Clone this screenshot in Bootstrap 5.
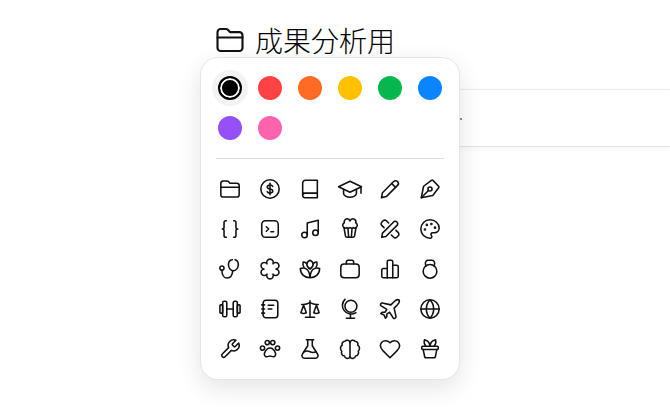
<!DOCTYPE html>
<html lang="ja">
<head>
    <meta charset="UTF-8">
    <meta name="viewport" content="width=device-width, initial-scale=1.0">
    <title>成果分析用</title>
    <link href="https://cdn.jsdelivr.net/npm/bootstrap@5.3.0/dist/css/bootstrap.min.css" rel="stylesheet">
    <style>
        body {
            background: #fff;
            color: #111;
            font-family: "Noto Sans CJK JP", "Liberation Sans", sans-serif;
            overflow: hidden;
            height: 407px;
        }
        .page-head {
            padding: 18px 0 0 215px;
            height: 89px;
            gap: 10px;
        }
        .page-head svg {
            width: 30px;
            height: 30px;
            margin-top: 7px;
            flex-shrink: 0;
        }
        .page-title {
            font-size: 28px;
            line-height: 44px;
            font-weight: 300;
            margin: 0;
            color: #000;
        }
        .doc-bar {
            margin-left: 300px;
            height: 58px;
            border-top: 1px solid #ececec;
            border-bottom: 1px solid #e2e2e2;
            box-shadow: 0 2px 6px rgba(0, 0, 0, .04);
        }
        .doc-mark {
            width: 2px;
            height: 2px;
            margin-left: 160px;
            margin-top: 1px;
            background: #8a8a8a;
        }
        .picker {
            position: absolute;
            left: 200px;
            top: 57px;
            width: 260px;
            height: 323px;
            padding: 10px 9px 0;
            background: #fff;
            border: 1px solid #e6e6e6;
            border-radius: 18px;
            box-shadow: 0 8px 24px rgba(0, 0, 0, .11);
        }
        .picker-grid {
            display: grid;
            grid-template-columns: repeat(6, 40px);
            grid-auto-rows: 40px;
        }
        .cell {
            display: flex;
            align-items: center;
            justify-content: center;
        }
        .swatch {
            width: 24px;
            height: 24px;
            border-radius: 50%;
        }
        .cell-active {
            width: 36px;
            height: 36px;
            margin: 2px;
            border-radius: 50%;
            background: #f3f3f3;
        }
        .swatch-active {
            background: #000;
            border: 2px solid #000;
            box-shadow: inset 0 0 0 2px #fff;
        }
        .picker-rule {
            margin: 10px 6px;
            border-top: 1px solid #dedede;
            opacity: 1;
        }
        .ico {
            width: 22px;
            height: 22px;
            fill: none;
            overflow: visible;
            stroke: #111;
            stroke-width: 1.7;
            stroke-linecap: round;
            stroke-linejoin: round;
        }
    </style>
</head>
<body>
    <!-- Title -->
    <header class="page-head d-flex align-items-start">
        <svg class="ico" viewBox="0 0 24 24"><path d="M2 8.500V5.700A2.500 2.500 0 0 1 4.500 3.200h4.200c.7 0 1.300.3 1.800.8L12 5.700h7.500A2.500 2.500 0 0 1 22 8.200v10.100a2.500 2.500 0 0 1-2.500 2.500h-15A2.500 2.500 0 0 1 2 18.300z"/><path d="M2 10h20"/></svg>
        <h1 class="page-title">成果分析用</h1>
    </header>

    <div class="doc-bar d-flex align-items-center"><div class="doc-mark"></div></div>

    <!-- Icon picker -->
    <div class="picker">
        <div class="picker-grid">
            <div class="cell"><div class="cell cell-active"><div class="swatch swatch-active"></div></div></div>
            <div class="cell"><div class="swatch" style="background:#ff4343"></div></div>
            <div class="cell"><div class="swatch" style="background:#ff6b24"></div></div>
            <div class="cell"><div class="swatch" style="background:#ffc000"></div></div>
            <div class="cell"><div class="swatch" style="background:#04b84f"></div></div>
            <div class="cell"><div class="swatch" style="background:#0a84ff"></div></div>
            <div class="cell"><div class="swatch" style="background:#9550f8"></div></div>
            <div class="cell"><div class="swatch" style="background:#ff63ae"></div></div>
        </div>
        <hr class="picker-rule">
        <div class="picker-grid">
            <!-- row 1 -->
            <div class="cell"><svg class="ico" viewBox="0 0 24 24"><path d="M2 8.500V5.700A2.500 2.500 0 0 1 4.500 3.200h4.200c.7 0 1.300.3 1.800.8L12 5.700h7.500A2.500 2.500 0 0 1 22 8.200v10.100a2.500 2.500 0 0 1-2.500 2.500h-15A2.500 2.500 0 0 1 2 18.300z"/><path d="M2 10h20"/></svg></div>
            <div class="cell"><svg class="ico" viewBox="0 0 24 24"><circle cx="12" cy="12" r="10"/><path d="M15 9.200c-.5-1-1.600-1.600-3-1.600-1.800 0-3 .9-3 2.200 0 3.100 6 1.500 6 4.500 0 1.300-1.200 2.200-3 2.200-1.400 0-2.500-.6-3-1.600"/><path d="M12 5.800v12.400"/></svg></div>
            <div class="cell"><svg class="ico" viewBox="0 0 24 24"><path d="M4 18.500V5.500A3 3 0 0 1 7 2.500h13v19H6.500A2.500 2.500 0 0 1 4 19a2.500 2.500 0 0 1 2.500-2.500H20"/></svg></div>
            <div class="cell"><svg class="ico" viewBox="0 0 24 24"><path d="M12 3.500-.5 9.500 12 15.500l12.500-6z"/><path d="M5 12.500V17c0 2 3.500 4 7 4s7-2 7-4v-4.500"/><path d="M24 10v6.500"/></svg></div>
            <div class="cell"><svg class="ico" viewBox="0 0 24 24"><path d="M16 3.800a2.700 2.700 0 0 1 4.200 4.200L8 20.300l-5.300 1.100 1.100-5.300z"/><path d="M13.800 6l4.200 4.200"/></svg></div>
            <div class="cell"><svg class="ico" viewBox="0 0 24 24"><path d="M2.500 21.500 5 9 13.500 2.500c.6-.4 1.200-.4 1.700.1L21.400 9c.5.5.5 1.100.1 1.700L15 19z"/><path d="M2.500 21.500l7.800-7.800"/><circle cx="12" cy="12" r="2.200"/></svg></div>
            <!-- row 2 -->
            <div class="cell"><svg class="ico" viewBox="0 0 24 24"><path d="M8 3H7.500a2 2 0 0 0-2 2v5a2 2 0 0 1-2 2 2 2 0 0 1 2 2v5c0 1.100.9 2 2 2H8"/><path d="M16 21h.5a2 2 0 0 0 2-2v-5c0-1.100.9-2 2-2a2 2 0 0 1-2-2V5a2 2 0 0 0-2-2H16"/></svg></div>
            <div class="cell"><svg class="ico" viewBox="0 0 24 24"><rect x="3" y="3" width="18" height="18" rx="4"/><path d="M8 9.500l2.500 2.500L8 14.500"/><path d="M13 15h3"/></svg></div>
            <div class="cell"><svg class="ico" viewBox="0 0 24 24"><path d="M9 18V5.500L21 2.500v13"/><circle cx="6" cy="18.500" r="3"/><circle cx="18" cy="16" r="3"/></svg></div>
            <div class="cell"><svg class="ico" viewBox="0 0 24 24"><path d="M5.500 10.500a3 3 0 0 1 .3-5.300 3.200 3.200 0 0 1 6.200-2 3.200 3.200 0 0 1 6.200 2 3 3 0 0 1 .3 5.300c-1 1-2 .6-2.700 0-1 .8-2.300 1-3.800 0-1.500 1-2.800.8-3.800 0-.7.6-1.700 1-2.700 0z"/><path d="M5.500 10.500 7 19.500c.2 1 .8 1.500 1.800 1.500h6.400c1 0 1.600-.5 1.800-1.500l1.500-9"/><path d="M9.800 11.500 10.500 21"/><path d="M14.200 11.500 13.500 21"/></svg></div>
            <div class="cell"><svg class="ico" viewBox="0 0 24 24"><path d="M10.500 5.500 8 3a2.400 2.400 0 0 0-3.400 0L3 4.600a2.400 2.400 0 0 0 0 3.400L5.500 10.500"/><path d="m18.500 13.500 2.500 2.500a2.400 2.400 0 0 1 0 3.400L19.400 21a2.400 2.400 0 0 1-3.400 0l-2.500-2.500"/><path d="M16.500 3.800a2.800 2.800 0 0 1 3.700 3.700L7.500 20.200 3 21l.8-4.500z"/></svg></div>
            <div class="cell"><svg class="ico" viewBox="0 0 24 24"><path d="M12 22a1 1 0 0 1 0-20 10 9 0 0 1 10 9 5 5 0 0 1-5 5h-2.250a1.750 1.750 0 0 0-1.400 2.800l.3.4a1.750 1.750 0 0 1-1.400 2.800z"/><circle cx="13.500" cy="6.500" r=".6"/><circle cx="17.500" cy="10.500" r=".6"/><circle cx="6.500" cy="12.500" r=".6"/><circle cx="8.500" cy="7.500" r=".6"/></svg></div>
            <!-- row 3 -->
            <div class="cell"><svg class="ico" viewBox="0 0 24 24"><path d="M14.500 1.800c-2.800.3-4.200 2.700-4.200 5.400 0 3.700 2.700 6.800 5.400 6.800s5.400-3.400 5.400-6.900c0-2.500-1.200-4.500-3.500-5.300"/><path d="M3.200 13.500c0 4.700 2.100 8.300 5.800 8.300 3.400 0 5.500-2.900 6-7.800"/><circle cx="3.200" cy="11" r="2.300"/></svg></div>
            <div class="cell"><svg class="ico" viewBox="0 0 24 24"><path d="M8.750 6.370A3.600 3.600 0 1 1 15.250 6.370A3.600 3.600 0 1 1 18.500 12A3.600 3.600 0 1 1 15.250 17.630A3.600 3.600 0 1 1 8.750 17.630A3.600 3.600 0 1 1 5.500 12A3.600 3.600 0 1 1 8.750 6.370z"/></svg></div>
            <div class="cell"><svg class="ico" viewBox="0 0 24 24"><path d="M12 12c-2.200-1.500-3.500-3.300-3.500-5.200 0-1.700 1.300-3.300 3.500-4.300 2.200 1 3.500 2.600 3.500 4.300 0 1.900-1.300 3.700-3.500 5.200z"/><path d="M8.600 6.500C7.300 4.700 5.900 4.300 4.500 4.500 4 6.500 4.300 8.400 5.400 10"/><path d="M15.400 6.500c1.300-1.800 2.700-2.200 4.100-2 .5 2 .2 3.900-.9 5.500"/><path d="M12 21.500c-5.500 0-10.500-3.500-10.500-10 2-.8 4.500-.8 6.300.3C10 13 11.500 15 12 21.500c.5-6.500 2-8.500 4.200-9.700 1.800-1.100 4.300-1.100 6.300-.3 0 6.500-5 10-10.500 10z"/></svg></div>
            <div class="cell"><svg class="ico" viewBox="0 0 24 24"><rect x="2" y="6.500" width="20" height="15" rx="3.500"/><path d="M8 6.500V4.500A2 2 0 0 1 10 2.500h4a2 2 0 0 1 2 2v2"/></svg></div>
            <div class="cell"><svg class="ico" viewBox="0 0 24 24"><path d="M9 21.500H4.500A1.500 1.500 0 0 1 3 20v-7A1.500 1.500 0 0 1 4.500 11.500H9"/><path d="M9 21.500V4A1.500 1.500 0 0 1 10.500 2.500h3A1.500 1.500 0 0 1 15 4v17.500"/><path d="M15 8h4.500A1.500 1.500 0 0 1 21 9.500V20a1.500 1.500 0 0 1-1.500 1.500H9"/></svg></div>
            <div class="cell"><svg class="ico" viewBox="0 0 24 24"><circle cx="12" cy="14.500" r="7.500"/><path d="M7.500 9 7 6.500c-.4-2.200 1-4 3-4h4c2 0 3.400 1.800 3 4L16.500 9"/></svg></div>
            <!-- row 4 -->
            <div class="cell"><svg class="ico" viewBox="0 0 24 24"><rect x="1" y="7.500" width="3" height="9" rx="1"/><rect x="4" y="3.500" width="4.500" height="17" rx="1.800"/><rect x="15.500" y="3.500" width="4.500" height="17" rx="1.800"/><rect x="20" y="7.500" width="3" height="9" rx="1"/><path d="M8.500 12h7"/></svg></div>
            <div class="cell"><svg class="ico" viewBox="0 0 24 24"><rect x="4.500" y="2.500" width="16" height="19" rx="3"/><path d="M3 7.500h3"/><path d="M3 12h3"/><path d="M3 16.500h3"/><path d="M10 8h6"/><path d="M10 12h4"/></svg></div>
            <div class="cell"><svg class="ico" viewBox="0 0 24 24"><path d="m16 16 3-8 3 8c-.87.65-1.920 1-3 1s-2.130-.35-3-1Z"/><path d="m2 16 3-8 3 8c-.87.65-1.920 1-3 1s-2.130-.35-3-1Z"/><path d="M7 21h10"/><path d="M12 3v18"/><path d="M3 7h2c2 0 5-1 7-2 2 1 5 2 7 2h2"/></svg></div>
            <div class="cell"><svg class="ico" viewBox="0 0 24 24"><circle cx="13" cy="9" r="6.500"/><path d="M6.500 1.500C3.200 5 2.800 10 5.500 13.500c3 4.300 9 5.200 13 2.500"/><path d="M12.500 17.500V22"/><path d="M8 22h9"/></svg></div>
            <div class="cell"><svg class="ico" viewBox="0 0 24 24"><path d="M18.600 20.500 16.500 11l3.700-3.700C21.900 5.600 22.400 3.200 21.800 2.200c-1-.6-3.400-.1-5.100 1.600L13 7.500 3.500 5.400c-.5-.1-1 .1-1.200.6l-.6 1c-.2.5-.1 1 .3 1.300L8.500 12.500l-2 3H3.500L2 17l3.500 1.500L7 22l1.500-1.500v-3l3-2 4.200 6.500c.3.400.8.500 1.300.3l1-.6c.5-.3.700-.8.600-1.200z"/></svg></div>
            <div class="cell"><svg class="ico" viewBox="0 0 24 24"><circle cx="12" cy="12" r="10"/><path d="M12 2a14.500 14.500 0 0 0 0 20 14.500 14.500 0 0 0 0-20"/><path d="M2 12h20"/></svg></div>
            <!-- row 5 -->
            <div class="cell"><svg class="ico" viewBox="0 0 24 24"><path d="M14.700 6.300a1 1 0 0 0 0 1.400l1.600 1.600a1 1 0 0 0 1.400 0l3.770-3.770a6 6 0 0 1-7.940 7.940l-6.910 6.910a2.120 2.120 0 0 1-3-3l6.910-6.910a6 6 0 0 1 7.940-7.940l-3.760 3.760z"/></svg></div>
            <div class="cell"><svg class="ico" viewBox="0 0 24 24"><circle cx="3.800" cy="11" r="2.300"/><circle cx="9" cy="5" r="2.300"/><circle cx="15" cy="5" r="2.300"/><circle cx="20.200" cy="11" r="2.300"/><path d="M12 11c-2.500 0-5 3-6 5.500-.7 2 .5 4 2.500 4 1.500 0 2.300-.8 3.500-.8s2 .8 3.500.8c2 0 3.200-2 2.500-4-1-2.500-3.500-5.500-6-5.500z"/></svg></div>
            <div class="cell"><svg class="ico" viewBox="0 0 24 24"><path d="M8 2h8"/><path d="M9.500 2v6.500L3.800 17.500A2.800 2.800 0 0 0 6.200 22h11.600a2.800 2.800 0 0 0 2.400-4.500L14.500 8.500V2"/><path d="M5.500 15c2-1 4.500-1 6.500 0s4.500 1 6.500 0"/></svg></div>
            <div class="cell"><svg class="ico" viewBox="0 0 24 24"><path d="M12 4v17"/><path d="M12 5A3.200 3.200 0 0 0 6.500 3.500 3.200 3.200 0 0 0 3.500 7.800a4.300 4.300 0 0 0-.5 6.700 3.700 3.700 0 0 0 3 5.200 3.200 3.200 0 0 0 6 .8"/><path d="M12 5a3.200 3.200 0 0 1 5.500-1.500 3.200 3.200 0 0 1 3 4.300 4.300 4.300 0 0 1 .5 6.700 3.700 3.700 0 0 1-3 5.200 3.200 3.200 0 0 1-6 .8"/></svg></div>
            <div class="cell"><svg class="ico" viewBox="0 0 24 24"><path d="M19.500 14c1.490-1.460 3-3.210 3-5.500A5.500 5.500 0 0 0 17 3c-1.760 0-3.500.5-5 2.200C10.500 3.500 8.760 3 7 3a5.500 5.500 0 0 0-5.500 5.500c0 2.300 1.510 4.040 3 5.500l7.500 7.500Z"/></svg></div>
            <div class="cell"><svg class="ico" viewBox="0 0 24 24"><rect x="3" y="9" width="18" height="3.500" rx="1"/><path d="M4.500 12.500 6 19.500A2 2 0 0 0 8 21.500h8a2 2 0 0 0 2-2l1.500-7"/><path d="M12 9C11.800 6 10 3 6 2c-.8 2.500-.3 5 1.500 7"/><path d="M12 9c.2-3 2-6 6-7 .8 2.500.3 5-1.500 7"/></svg></div>
        </div>
    </div>
</body>
</html>
